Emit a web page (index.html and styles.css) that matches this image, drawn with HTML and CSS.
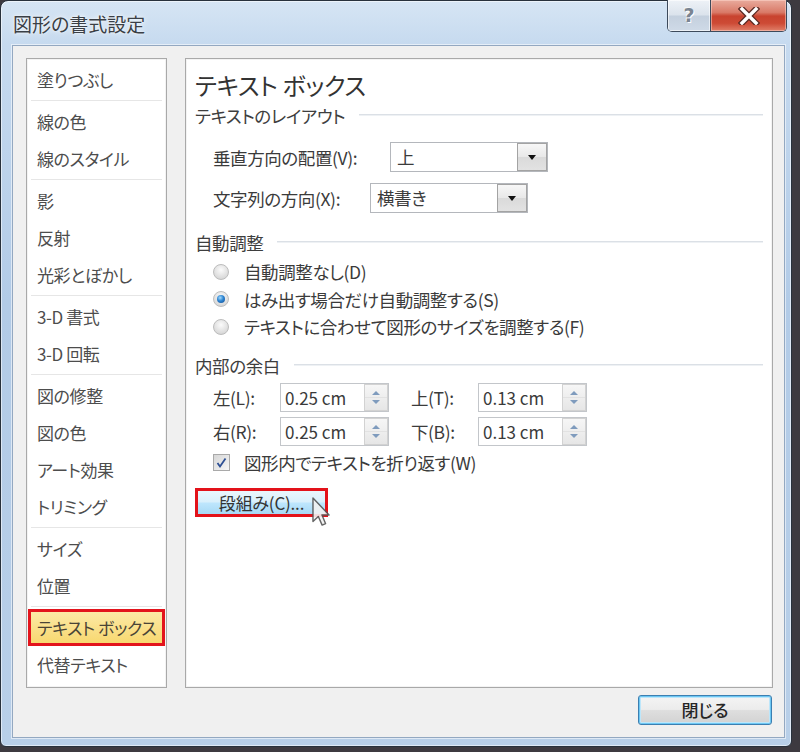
FILE: index.html
```html
<!DOCTYPE html>
<html lang="ja">
<head>
<meta charset="utf-8">
<title>図形の書式設定</title>
<link rel="stylesheet" href="styles.css">
</head>
<body>
<div class="window">
  <div class="titlebar">
    <div class="title">図形の書式設定</div>
    <div class="caption">
      <div class="cap-help">?</div>
      <div class="cap-close">
        <svg width="22" height="18" viewBox="0 0 22 18"><path d="M4 2 L18 16 M18 2 L4 16" stroke="#5a2a24" stroke-width="6" stroke-linecap="square"/><path d="M4 2 L18 16 M18 2 L4 16" stroke="#ffffff" stroke-width="3.4" stroke-linecap="square"/></svg>
      </div>
    </div>
  </div>
  <div class="client">
    <div class="main">
      <ul class="nav">
        <li class="nav-item">塗りつぶし</li>
        <li class="nav-sep"></li>
        <li class="nav-item">線の色</li>
        <li class="nav-item">線のスタイル</li>
        <li class="nav-sep"></li>
        <li class="nav-item">影</li>
        <li class="nav-item">反射</li>
        <li class="nav-item">光彩とぼかし</li>
        <li class="nav-sep"></li>
        <li class="nav-item">3-D 書式</li>
        <li class="nav-item">3-D 回転</li>
        <li class="nav-sep"></li>
        <li class="nav-item">図の修整</li>
        <li class="nav-item">図の色</li>
        <li class="nav-item">アート効果</li>
        <li class="nav-item">トリミング</li>
        <li class="nav-sep"></li>
        <li class="nav-item">サイズ</li>
        <li class="nav-item">位置</li>
        <li class="nav-sep"></li>
        <li class="nav-item selected">テキスト ボックス</li>
        <li class="nav-item">代替テキスト</li>
      </ul>
      <div class="panel">
        <div class="panel-title">テキスト ボックス</div>
        <div class="sec">テキストのレイアウト</div>
        <div class="row combo-row r1">
          <span class="lbl-v">垂直方向の配置(V):</span>
          <div class="combo"><span class="combo-val">上</span><span class="combo-btn"></span></div>
        </div>
        <div class="row combo-row r2">
          <span class="lbl-x">文字列の方向(X):</span>
          <div class="combo"><span class="combo-val">横書き</span><span class="combo-btn"></span></div>
        </div>
        <div class="sec sec-auto">自動調整</div>
        <div class="radios">
          <div class="row radio-row"><span class="radio"></span>自動調整なし(D)</div>
          <div class="row radio-row"><span class="radio on"></span>はみ出す場合だけ自動調整する(S)</div>
          <div class="row radio-row"><span class="radio"></span>テキストに合わせて図形のサイズを調整する(F)</div>
        </div>
        <div class="sec sec-margin">内部の余白</div>
        <div class="row spin-row s1">
          <span class="lbl-s">左(L):</span>
          <div class="spin"><span class="spin-val">0.25 cm</span><span class="spin-btns"><span class="spin-up"></span><span class="spin-dn"></span></span></div>
          <span class="spin-gap"></span>
          <span class="lbl-s">上(T):</span>
          <div class="spin"><span class="spin-val">0.13 cm</span><span class="spin-btns"><span class="spin-up"></span><span class="spin-dn"></span></span></div>
        </div>
        <div class="row spin-row s2">
          <span class="lbl-s">右(R):</span>
          <div class="spin"><span class="spin-val">0.25 cm</span><span class="spin-btns"><span class="spin-up"></span><span class="spin-dn"></span></span></div>
          <span class="spin-gap"></span>
          <span class="lbl-s">下(B):</span>
          <div class="spin"><span class="spin-val">0.13 cm</span><span class="spin-btns"><span class="spin-up"></span><span class="spin-dn"></span></span></div>
        </div>
        <div class="row check-row">
          <span class="checkbox"><svg width="15" height="15" viewBox="0 0 15 15"><path d="M3.5 8 L6 11.5 L11.5 3.5" fill="none" stroke="#2d4f94" stroke-width="1.8"/></svg></span>
          図形内でテキストを折り返す(W)
        </div>
        <div class="btn-row">
          <div class="btn-cols">段組み(C)...</div>
          <svg class="cursor" width="19" height="30" viewBox="0 0 12 19"><path d="M0.6 0.6 L0.6 15.5 L4 12.3 L6.4 17.8 L8.6 16.9 L6.3 11.4 L10.8 11.4 Z" fill="#f2f2f2" stroke="#555" stroke-width="0.9" stroke-linejoin="round"/></svg>
        </div>
      </div>
    </div>
    <div class="footer">
      <button class="btn-close">閉じる</button>
    </div>
  </div>
</div>
</body>
</html>
```

FILE: styles.css
```css
* {
  box-sizing: border-box;
  margin: 0;
  padding: 0;
}

html, body {
  width: 800px;
  height: 752px;
  overflow: hidden;
}

body {
  background: #3d3a40;
  font-family: "Noto Sans CJK JP", "Noto Sans", sans-serif;
  font-feature-settings: "palt" 1;
  color: #3b3b3b;
}

.window {
  width: 792px;
  height: 747px;
  border: 1px solid #28313c;
  border-radius: 8px 8px 6px 6px;
  background: linear-gradient(to bottom, #d6e5f4 0px, #c6daef 44px, #b2cbe7 300px, #b8cfe8 747px);
  padding: 0 6px 8px 11px;
  display: flex;
  flex-direction: column;
  box-shadow: inset 0 0 0 1px rgba(255, 255, 255, 0.55);
}

/* title bar */
.titlebar {
  height: 44px;
  display: flex;
  justify-content: space-between;
  align-items: flex-start;
}

.title {
  margin-top: 11px;
  padding-left: 1px;
  font-size: 19px;
  line-height: 24px;
  color: #3a3f46;
  text-shadow: 0 0 6px rgba(255, 255, 255, 0.9), 0 0 2px rgba(255, 255, 255, 0.9);
}

.caption {
  display: flex;
  height: 32px;
  margin-top: -1px;
  margin-right: -2px;
  border: 1px solid #3d4a5b;
  border-top: none;
  border-radius: 0 0 5px 5px;
  overflow: hidden;
}

.cap-help {
  width: 43px;
  border-right: 1px solid #3d4a5b;
  background: linear-gradient(to bottom, #eef2f7 0%, #dbe3ec 48%, #c4d0de 52%, #cfdae7 100%);
  box-shadow: inset 0 0 0 1px rgba(255, 255, 255, 0.6);
  font-family: "DejaVu Sans", sans-serif;
  font-weight: bold;
  font-size: 19px;
  line-height: 30px;
  text-align: center;
  color: #7b8592;
  text-shadow: 1px 1px 0 #ffffff, -1px -1px 0 #f4f6f8;
}

.cap-close {
  width: 75px;
  display: flex;
  align-items: center;
  justify-content: center;
  background: linear-gradient(to bottom, #e9ab9d 0%, #d97a68 40%, #c8432f 52%, #cd4a35 75%, #e0806a 100%);
  box-shadow: inset 0 0 0 1px rgba(255, 220, 210, 0.5);
}

/* client area */
.client {
  height: 693px;
  background: #f0f0f0;
  border: 1px solid #93a8c1;
  box-shadow: 0 0 0 1px rgba(255, 255, 255, 0.55);
  padding: 12px 11px 12px 13px;
  display: flex;
  flex-direction: column;
}

.main {
  display: flex;
  gap: 18px;
  height: 630px;
}

/* navigation list */
.nav {
  width: 141px;
  background: #ffffff;
  border: 1px solid #a9a9a9;
  box-shadow: inset 0 0 0 1px #f3f3f3;
  padding-top: 2px;
  list-style: none;
}

.nav-item {
  height: 37px;
  line-height: 37px;
  padding-left: 10px;
  font-size: 17px;
  letter-spacing: -0.4px;
  color: #4d4d4d;
  white-space: nowrap;
}

.nav-sep {
  height: 5px;
  margin: 0 4px;
  background: linear-gradient(to bottom, transparent 2px, #e6e6e6 2px, #e6e6e6 3px, transparent 3px);
}

.nav-item.selected {
  margin: 0 1px;
  border: 3px solid #e3141c;
  line-height: 31px;
  padding-left: 6px;
  background: linear-gradient(to bottom, #fce9a6, #f8d870);
  color: #4a4436;
}

/* right panel */
.panel {
  width: 588px;
  background: #ffffff;
  border: 1px solid #a9a9a9;
  box-shadow: inset 0 0 0 1px #f3f3f3;
  padding: 12px 9px 0 9px;
}

.panel-title {
  height: 28px;
  line-height: 28px;
  margin-bottom: 4px;
  font-size: 24px;
  letter-spacing: -0.3px;
  color: #333333;
  white-space: nowrap;
}

.sec {
  display: flex;
  align-items: center;
  height: 24px;
  font-size: 17.5px;
  letter-spacing: -0.4px;
  color: #3e3e3e;
  white-space: nowrap;
}

.sec::after {
  content: "";
  flex: 1;
  height: 2px;
  margin-left: 14px;
  background: linear-gradient(to bottom, #dbe0e6 1px, #eef1f4 1px);
}

.sec-auto {
  margin-top: 17px;
}

.sec-margin {
  margin-top: 12.5px;
}

.row {
  display: flex;
  align-items: center;
  padding-left: 18px;
  font-size: 17.5px;
  letter-spacing: -0.4px;
  color: #3b3b3b;
  white-space: nowrap;
}

/* combo boxes */
.combo-row {
  height: 30px;
}

.combo-row.r1 {
  margin-top: 15px;
}

.combo-row.r2 {
  margin-top: 11px;
}

.lbl-v {
  width: 177px;
}

.lbl-x {
  width: 157px;
}

.combo {
  width: 158px;
  height: 30px;
  display: flex;
  background: #ffffff;
  border: 1px solid #b4b7bc;
}

.combo-val {
  flex: 1;
  padding-left: 6px;
  line-height: 28px;
}

.combo-btn {
  width: 30px;
  height: 28px;
  display: flex;
  align-items: center;
  justify-content: center;
  border: 1px solid #a3a3a3;
  background: linear-gradient(to bottom, #f7f7f7, #e8e8e8 50%, #dadada 51%, #e2e2e2);
}

.combo-btn::before {
  content: "";
  border-left: 4px solid transparent;
  border-right: 4px solid transparent;
  border-top: 5px solid #111111;
}

/* radios */
.radios {
  margin-top: 4px;
}

.radio-row {
  height: 27.5px;
}

.radio {
  width: 16px;
  height: 16px;
  margin-right: 15px;
  border-radius: 50%;
  border: 1px solid #bcbcbc;
  background: radial-gradient(circle at 50% 35%, #fbfbfb, #d6d6d6 80%);
  display: flex;
  align-items: center;
  justify-content: center;
}

.radio.on::after {
  content: "";
  width: 8px;
  height: 8px;
  border-radius: 50%;
  background: radial-gradient(circle at 40% 35%, #a6dcfb 0%, #2d84d2 45%, #124c8f 100%);
}

/* spin boxes */
.spin-row {
  height: 29px;
}

.spin-row.s1 {
  margin-top: 6px;
}

.spin-row.s2 {
  margin-top: 5px;
}

.lbl-s {
  width: 67px;
}

.spin-gap {
  width: 22px;
}

.spin {
  width: 109px;
  height: 29px;
  display: flex;
  background: #ffffff;
  border: 1px solid #c3c6ca;
}

.spin-val {
  flex: 1;
  padding-left: 4px;
  line-height: 27px;
  font-size: 17px;
  letter-spacing: 0;
  color: #3a3a3a;
}

.spin-btns {
  width: 24px;
  display: flex;
  flex-direction: column;
  border: 1px solid #d2d2d2;
  background: linear-gradient(to bottom, #f6f6f6, #e6e6e6);
}

.spin-up,
.spin-dn {
  flex: 1;
  display: flex;
  justify-content: center;
}

.spin-up {
  align-items: flex-end;
  padding-bottom: 2px;
  border-bottom: 1px solid #e2e2e2;
}

.spin-dn {
  align-items: flex-start;
  padding-top: 2px;
}

.spin-up::before {
  content: "";
  border-left: 4px solid transparent;
  border-right: 4px solid transparent;
  border-bottom: 4px solid #7f9bbd;
}

.spin-dn::before {
  content: "";
  border-left: 4px solid transparent;
  border-right: 4px solid transparent;
  border-top: 4px solid #7f9bbd;
}

/* checkbox */
.check-row {
  height: 24px;
  margin-top: 4px;
}

.checkbox {
  width: 17px;
  height: 17px;
  margin-right: 14px;
  border: 1px solid #a9a9a9;
  background: linear-gradient(135deg, #d6d6d6, #f6f6f6);
  display: flex;
  align-items: center;
  justify-content: center;
}

/* columns button */
.btn-row {
  position: relative;
  margin-top: 14px;
  height: 29px;
  display: flex;
}

.btn-cols {
  width: 133px;
  height: 29px;
  border: 3px solid #e3121a;
  background: linear-gradient(to bottom, #eaf6fd 0%, #d9f0fc 48%, #bee6fd 52%, #a7d9f5 100%);
  font-size: 17px;
  letter-spacing: -0.2px;
  line-height: 23px;
  text-align: center;
  color: #333333;
  white-space: nowrap;
}

.cursor {
  position: absolute;
  left: 117px;
  top: 9px;
  opacity: 0.9;
}

/* footer */
.footer {
  margin-top: 7px;
  display: flex;
  justify-content: flex-end;
  padding-right: 1px;
}

.btn-close {
  width: 134px;
  height: 30px;
  border: 1px solid #3c7fb1;
  border-radius: 3px;
  box-shadow: inset 0 0 0 1px #6cc7f3, inset 0 0 0 2px #bde6fa;
  background: linear-gradient(to bottom, #f4f4f4 0%, #ececec 48%, #dedede 52%, #d2d2d2 100%);
  font-family: "Noto Sans CJK JP", "Noto Sans", sans-serif;
  font-feature-settings: "palt" 1;
  font-size: 17px;
  font-weight: 500;
  color: #262626;
  line-height: 26px;
}
```
